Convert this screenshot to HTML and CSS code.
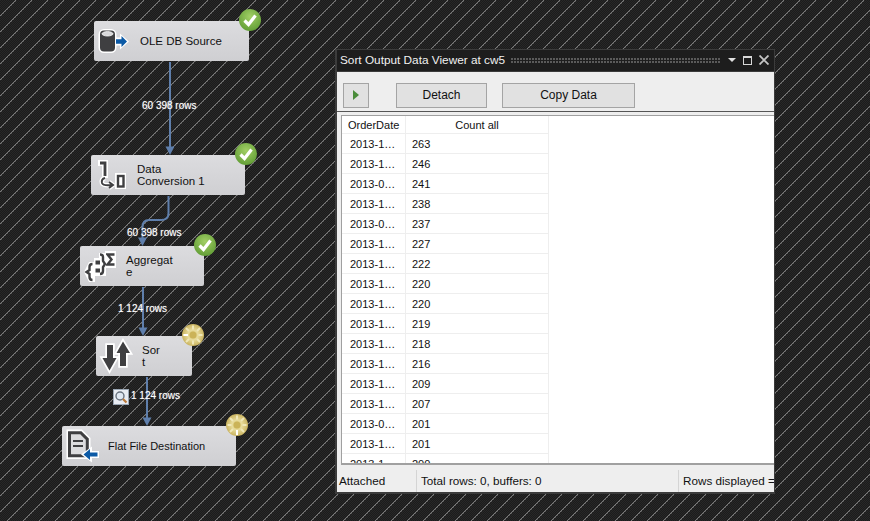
FILE: index.html
```html
<!DOCTYPE html>
<html lang="en">
<head>
<meta charset="utf-8">
<title>Sort Output Data Viewer</title>
<link rel="stylesheet" href="styles.css">
</head>
<body>
<main class="canvas">
  <svg class="wires" width="870" height="521" viewBox="0 0 870 521" shape-rendering="crispEdges">
    <defs>
      <pattern id="dither" width="2" height="2" patternUnits="userSpaceOnUse">
        <rect width="2" height="2" fill="#1c1c1c"/>
        <rect width="1" height="1" fill="#272727"/>
        <rect x="1" y="1" width="1" height="1" fill="#272727"/>
      </pattern>
      <pattern id="hatch" width="16" height="16" patternUnits="userSpaceOnUse">
        <path fill="#7c7c7c" d="M15 0h1v1h-1zM14 1h1v1h-1zM13 2h1v1h-1zM12 3h1v1h-1zM11 4h1v1h-1zM10 5h1v1h-1zM9 6h1v1h-1zM8 7h1v1h-1zM7 8h1v1h-1zM6 9h1v1h-1zM5 10h1v1h-1zM4 11h1v1h-1zM3 12h1v1h-1zM2 13h1v1h-1zM1 14h1v1h-1zM0 15h1v1h-1z"/>
        <path fill="#4c4c4c" d="M15 1h1v1h-1zM13 3h1v1h-1zM11 5h1v1h-1zM9 7h1v1h-1zM7 9h1v1h-1zM5 11h1v1h-1zM3 13h1v1h-1zM1 15h1v1h-1z"/>
      </pattern>
    </defs>
    <rect width="870" height="521" fill="url(#dither)"/>
    <rect width="870" height="521" fill="url(#hatch)"/>
    <g class="wire" shape-rendering="auto">
      <path d="M170 62V150"/>
      <path d="M168.500 196V213Q168.500 220 161 220H149Q142.500 220 142.500 227V241"/>
      <path d="M143 287V331"/>
      <path d="M147 377V421"/>
    </g>
    <g class="head" shape-rendering="auto">
      <path d="M165.500 146.500H174.500L170 155Z"/>
      <path d="M138 237.500H147L142.500 246Z"/>
      <path d="M138.500 327.500H147.500L143 336Z"/>
      <path d="M142.500 417.500H151.500L147 426Z"/>
    </g>
  </svg>

  <span class="flow f1">60 398 rows</span>
  <span class="flow f2">60 398 rows</span>
  <span class="flow f3">1 124 rows</span>
  <span class="flow f4">1 124 rows</span>

  <svg class="lens" width="16" height="16" viewBox="0 0 16 16">
    <rect x=".5" y=".5" width="15" height="15" fill="#e8ecf2" stroke="#9aa6b4"/>
    <circle cx="7" cy="7" r="4" fill="#dfe8f2" stroke="#68727e" stroke-width="1.400"/>
    <path d="M10 10l3.500 3.500" stroke="#b9793a" stroke-width="2.200"/>
  </svg>

  <div class="node n1">
    <svg class="ico" width="40" height="40" viewBox="0 0 40 40">
      <rect x="6" y="9.500" width="15" height="21" rx="4" fill="#3f3f41" stroke="#fff" stroke-width="3"/>
      <ellipse cx="13.500" cy="12.800" rx="5.500" ry="2.200" fill="#d8d8da" stroke="#fff" stroke-width=".8"/>
      <path d="M21 16.500H26V12.500L35 20.500L26 28.500V24.500H21Z" fill="#fff"/>
      <path d="M22 18.300H27.500V15L33 20.500L27.500 26V22.700H22Z" fill="#0c5aa6"/>
    </svg>
    <span class="name">OLE DB Source</span>
  </div>

  <div class="node n2">
    <svg class="ico" width="40" height="40" viewBox="0 0 40 40">
      <path d="M7 5H17V23H11V11H7Z" fill="#fff"/>
      <path d="M9 8H14V21" fill="none" stroke="#3f3f41" stroke-width="2.800"/>
      <path d="M14 23Q10 24 11 28Q12 31 21 30M18 27L22 30L18 33" fill="none" stroke="#fff" stroke-width="4.500"/>
      <path d="M14 23Q10 24 11 28Q12 31 21 30M18 27L22 30L18 33" fill="none" stroke="#3f3f41" stroke-width="2"/>
      <rect x="24" y="18" width="11" height="16" fill="#fff"/>
      <rect x="27" y="21" width="5.500" height="10.500" fill="none" stroke="#3f3f41" stroke-width="2.400"/>
    </svg>
    <span class="name">Data<br>Conversion 1</span>
  </div>

  <div class="node n3">
    <svg class="ico" width="40" height="40" viewBox="0 0 40 40">
      <path d="M25 5H36V22H25Z" fill="#fff"/>
      <path d="M34.500 8.500H27.500L31.500 13.500L27.500 18.500H34.500" fill="none" stroke="#3f3f41" stroke-width="2.400"/>
      <path d="M19 7H26V30H14V12H19Z" fill="#fff"/>
      <path d="M20 8.500Q23 8.500 23 11V15L25 18L23 21V25Q23 28 20 28" fill="none" stroke="#3f3f41" stroke-width="2.400"/>
      <path d="M9 16H15V36H9L4 26Z" fill="#fff"/>
      <path d="M12.500 18Q9.500 18 9.500 21V24L6.500 26L9.500 28V31Q9.500 34 12.500 34" fill="none" stroke="#3f3f41" stroke-width="2.400"/>
      <rect x="15.500" y="14.500" width="4.500" height="4" fill="#3f3f41"/>
      <rect x="15.500" y="22.500" width="4.500" height="4" fill="#3f3f41"/>
    </svg>
    <span class="name">Aggregat<br>e</span>
  </div>

  <div class="node n4">
    <svg class="ico" width="40" height="40" viewBox="0 0 40 40">
      <path class="halo" d="M11 9H17V22H20.500L13.500 34.500L6.500 22H11Z" fill="#3f3f41" stroke="#fff" stroke-width="3.500"/>
      <path class="halo" d="M24 30H30V17H34L27 5.500L20.500 17H24Z" fill="#3f3f41" stroke="#fff" stroke-width="3.500"/>
    </svg>
    <span class="name">Sor<br>t</span>
  </div>

  <div class="node n5">
    <svg class="ico" width="40" height="40" viewBox="0 0 40 40">
      <path d="M4.500 3.500H20L28.500 12V33H4.500Z" fill="#fff"/>
      <path d="M7.500 6.800H18.800L25.300 13.200V29.800H7.500Z" fill="#dcdcde" stroke="#3f3f41" stroke-width="3"/>
      <path d="M11 15H21M11 20H21" stroke="#3f3f41" stroke-width="2.200"/>
      <path d="M37 25H30V20.500L19 28.500L30 36.500V32H37Z" fill="#fff"/>
      <path d="M35.500 26.500H28V23L21.500 28.500L28 34V30.500H35.500Z" fill="#0c5aa6"/>
    </svg>
    <span class="name">Flat File Destination</span>
  </div>

  <svg class="badge b1" width="24" height="24" viewBox="0 0 24 24"><use href="#ok"/></svg>
  <svg class="badge b2" width="24" height="24" viewBox="0 0 24 24"><use href="#ok"/></svg>
  <svg class="badge b3" width="24" height="24" viewBox="0 0 24 24"><use href="#ok"/></svg>
  <svg class="badge b4" width="24" height="24" viewBox="0 0 24 24"><use href="#busy"/></svg>
  <svg class="badge b5" width="24" height="24" viewBox="0 0 24 24"><use href="#busy5"/></svg>

  <svg class="defs" width="0" height="0">
    <defs>
      <radialGradient id="gr" cx=".5" cy=".35" r=".7"><stop offset="0" stop-color="#a2cf66"/><stop offset="1" stop-color="#5d9a32"/></radialGradient>
      <radialGradient id="ye" cx=".5" cy=".5" r=".55"><stop offset="0" stop-color="#cdb55a"/><stop offset=".4" stop-color="#e8dc9c"/><stop offset="1" stop-color="#c4ac55"/></radialGradient>
      <g id="ok">
        <circle cx="12" cy="12" r="11" fill="url(#gr)"/>
        <path d="M6.500 12.500L10.500 16.500L17.500 7.500" fill="none" stroke="#fff" stroke-width="3.200"/>
      </g>
      <g id="gear">
        <circle cx="12" cy="12" r="11" fill="url(#ye)"/>
        <path d="M12 2.500V6.500M12 17.500V21.500M19 5L16 8M8 16L5 19M21.500 12H17.500M2.500 12H6.500M5 5L8 8M16 16L19 19" stroke="#efe7b8" stroke-width="2"/>
        <circle cx="12" cy="12" r="3.500" fill="#cbb358"/>
      </g>
      <g id="busy"><use href="#gear"/><path d="M2.500 12H7" stroke="#fff" stroke-width="2"/></g>
      <g id="busy5"><use href="#gear"/><path d="M12 17V22" stroke="#fff" stroke-width="2"/></g>
    </defs>
  </svg>

  <section class="viewer">
    <header class="titlebar">
      <span class="title">Sort Output Data Viewer at cw5</span>
      <span class="grip"></span>
      <span class="caret"></span>
      <span class="max"></span>
      <svg class="close" width="10" height="10" viewBox="0 0 10 10"><path d="M.5 .5L9.500 9.500M9.500 .5L.5 9.500" stroke="#c4c4c4" stroke-width="1.800"/></svg>
    </header>
    <div class="toolbar">
      <button class="btn play" type="button"><span class="tri"></span></button>
      <button class="btn detach" type="button">Detach</button>
      <button class="btn copy" type="button">Copy Data</button>
    </div>
    <div class="gridwrap">
      <div class="grid">
        <div class="hd">OrderDate</div><div class="hd ctr">Count all</div>
        <div class="c1">2013-1…</div><div class="c2">263</div>
        <div class="c1">2013-1…</div><div class="c2">246</div>
        <div class="c1">2013-0…</div><div class="c2">241</div>
        <div class="c1">2013-1…</div><div class="c2">238</div>
        <div class="c1">2013-0…</div><div class="c2">237</div>
        <div class="c1">2013-1…</div><div class="c2">227</div>
        <div class="c1">2013-1…</div><div class="c2">222</div>
        <div class="c1">2013-1…</div><div class="c2">220</div>
        <div class="c1">2013-1…</div><div class="c2">220</div>
        <div class="c1">2013-1…</div><div class="c2">219</div>
        <div class="c1">2013-1…</div><div class="c2">218</div>
        <div class="c1">2013-1…</div><div class="c2">216</div>
        <div class="c1">2013-1…</div><div class="c2">209</div>
        <div class="c1">2013-1…</div><div class="c2">207</div>
        <div class="c1">2013-0…</div><div class="c2">201</div>
        <div class="c1">2013-1…</div><div class="c2">201</div>
        <div class="c1">2013-1…</div><div class="c2">200</div>
      </div>
    </div>
    <footer class="status">
      <span class="s1">Attached</span>
      <span class="s2">Total rows: 0, buffers: 0</span>
      <span class="s3">Rows displayed =</span>
    </footer>
  </section>
</main>
</body>
</html>
```

FILE: styles.css
```css
html, body {
  margin: 0;
  padding: 0;
  overflow: hidden;
}
body {
  width: 870px;
  height: 521px;
  font-family: "Liberation Sans", Arial, sans-serif;
}
.canvas {
  position: relative;
  width: 870px;
  height: 521px;
  overflow: hidden;
  background: #1e1e1e;
}
.wires {
  position: absolute;
  left: 0;
  top: 0;
}
.wire path {
  fill: none;
  stroke: #5f7fac;
  stroke-width: 2;
}
.head path {
  fill: #5f7fac;
}
.defs {
  position: absolute;
}
.halo {
  paint-order: stroke;
}
.flow {
  position: absolute;
  color: #fff;
  font-size: 10px;
  line-height: 14px;
  white-space: nowrap;
  text-shadow: 0 0 1px rgba(255, 255, 255, 0.6);
}
.f1 { left: 142px; top: 99px; }
.f2 { left: 127px; top: 226px; }
.f3 { left: 118px; top: 302px; }
.f4 { left: 131px; top: 389px; }
.lens {
  position: absolute;
  left: 113px;
  top: 389px;
}
.node {
  position: absolute;
  display: flex;
  align-items: center;
  gap: 6px;
  height: 40px;
  border-radius: 2px;
  background: linear-gradient(#dcdcdf, #cfcfd2);
  color: #111;
  font-size: 11.5px;
  line-height: 12px;
}
.name { display: block; }
.ico { flex: none; display: block; }
.ico rect[stroke="#fff"] { paint-order: stroke; }
.n1 { left: 94px; top: 21px; width: 155px; }
.n2 { left: 91px; top: 155px; width: 154px; }
.n3 { left: 80px; top: 246px; width: 124px; }
.n4 { left: 96px; top: 336px; width: 96px; }
.n5 { left: 62px; top: 426px; width: 174px; font-size: 11px; }
.badge { position: absolute; }
.b1 { left: 238px; top: 8px; }
.b2 { left: 234px; top: 142px; }
.b3 { left: 193px; top: 233px; }
.b4 { left: 181px; top: 323px; }
.b5 { left: 225px; top: 413px; }

.viewer {
  position: absolute;
  left: 335px;
  top: 49px;
  width: 440px;
  height: 445px;
  box-sizing: border-box;
  display: flex;
  flex-direction: column;
  background: #eeeeee;
  border: 1px solid #3c3c3c;
  border-left-width: 2px;
  border-bottom-width: 2px;
  overflow: hidden;
}
.titlebar {
  display: flex;
  align-items: center;
  flex: none;
  box-sizing: border-box;
  height: 22px;
  padding: 0 5px 1px 3px;
  background: #1d1d1d;
  border-bottom: 1px solid #3c3c3c;
  color: #f1f1f1;
  font-size: 11.8px;
}
.title { white-space: nowrap; }
.grip {
  flex: 1;
  height: 5px;
  margin: 0 7px 0 6px;
  background-image: radial-gradient(circle at 1px 1px, #5a5a5a 0.8px, transparent 1px);
  background-size: 3px 3px;
}
.caret {
  width: 0;
  height: 0;
  margin-right: 7px;
  border-left: 4px solid transparent;
  border-right: 4px solid transparent;
  border-top: 4px solid #e0e0e0;
}
.max {
  width: 7px;
  height: 6px;
  margin-right: 7px;
  border: 1px solid #d8d8d8;
  border-top-width: 2px;
}
.close { display: block; }
.toolbar {
  flex: none;
  display: flex;
  align-items: center;
  height: 40px;
  padding: 7px 0 0 6px;
  box-sizing: border-box;
  border-bottom: 1px solid #555;
}
.btn {
  box-sizing: border-box;
  height: 25px;
  padding: 0;
  background: #e1e1e1;
  border: 1px solid #a4a4a4;
  color: #111;
  font-family: inherit;
  font-size: 12px;
}
.play {
  width: 26px;
  margin-right: 27px;
  display: flex;
  align-items: center;
  justify-content: center;
}
.tri {
  width: 0;
  height: 0;
  border-top: 5px solid transparent;
  border-bottom: 5px solid transparent;
  border-left: 6px solid #4a8c3a;
}
.detach { width: 91px; margin-right: 15px; }
.copy { width: 133px; }
.gridwrap {
  flex: none;
  height: 350px;
  margin: 3px 0 0 4px;
  box-sizing: border-box;
  background: #fff;
  border-top: 1px solid #a0a0a0;
  border-bottom: 2px solid #a0a0a0;
  border-left: 1px solid #a0a0a0;
  overflow: hidden;
}
.grid {
  display: grid;
  grid-template-columns: 64px 143px;
  grid-auto-rows: 20px;
  grid-template-rows: 18px;
  width: 207px;
  color: #111;
  font-size: 11px;
}
.grid > div {
  box-sizing: border-box;
  display: flex;
  align-items: center;
  border-right: 1px solid #eeeeee;
  border-bottom: 1px solid #eeeeee;
  white-space: nowrap;
}
.grid > .hd {
  padding-left: 6px;
  padding-top: 1px;
  background: #fff;
}
.grid > .ctr {
  justify-content: center;
  padding-left: 0;
}
.grid > .c1 { padding-left: 8px; }
.grid > .c2 { padding-left: 6px; }
.status {
  flex: 1;
  display: flex;
  align-items: center;
  min-height: 0;
  padding-top: 4px;
  box-sizing: border-box;
  color: #111;
  font-size: 11.7px;
  white-space: nowrap;
}
.status span {
  flex: none;
  display: flex;
  align-items: center;
  height: 22px;
  box-sizing: border-box;
}
.s1 { width: 80px; padding-left: 2px; border-right: 1px solid #d4d4d4; }
.s2 { width: 262px; padding-left: 4px; border-right: 1px solid #d4d4d4; }
.s3 { padding-left: 4px; }
```
